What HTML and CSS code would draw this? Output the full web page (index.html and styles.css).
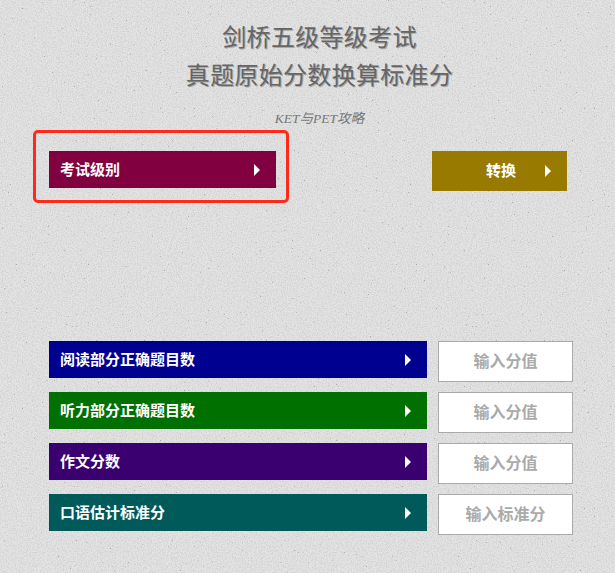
FILE: index.html
```html
<!DOCTYPE html>
<html lang="zh-CN">
<head>
  <meta charset="UTF-8" />
  <meta name="viewport" content="width=device-width, initial-scale=1.0"/>
  <title>剑桥五级等级考试</title>
  <link rel="stylesheet" href="styles.css">
</head>
<body>
  <div class="page">
    <h1 class="title">剑桥五级等级考试<br>真题原始分数换算标准分</h1>
    <p class="subtitle">KET与PET攻略</p>

    <div class="top-row">
      <div class="level-wrap">
        <div class="select select-level">
          <span>考试级别</span>
          <i class="arrow"></i>
        </div>
        <div class="highlight"></div>
      </div>
      <div class="select convert-btn">
        <span>转换</span>
        <i class="arrow"></i>
      </div>
    </div>

    <div class="score-rows">
      <div class="score-row">
        <div class="select blue"><span>阅读部分正确题目数</span><i class="arrow"></i></div>
        <div class="score-input">输入分值</div>
      </div>
      <div class="score-row">
        <div class="select green"><span>听力部分正确题目数</span><i class="arrow"></i></div>
        <div class="score-input">输入分值</div>
      </div>
      <div class="score-row">
        <div class="select purple"><span>作文分数</span><i class="arrow"></i></div>
        <div class="score-input">输入分值</div>
      </div>
      <div class="score-row">
        <div class="select teal"><span>口语估计标准分</span><i class="arrow"></i></div>
        <div class="score-input">输入标准分</div>
      </div>
    </div>
  </div>
</body>
</html>
```
FILE: styles.css
```css
html, body {
  margin: 0;
  height: 100%;
}
body {
  background-color: #e4e4e4;
  background-image:
    url("data:image/svg+xml,%3Csvg xmlns='http://www.w3.org/2000/svg' width='400' height='400'%3E%3Cfilter id='s'%3E%3CfeTurbulence type='fractalNoise' baseFrequency='0.5' numOctaves='1' seed='11'/%3E%3CfeColorMatrix values='0 0 0 0 0.4 0 0 0 0 0.4 0 0 0 0 0.4 14 0 0 0 -10.6'/%3E%3C/filter%3E%3Crect width='400' height='400' filter='url(%23s)'/%3E%3C/svg%3E"),
    url("data:image/svg+xml,%3Csvg xmlns='http://www.w3.org/2000/svg' width='300' height='300'%3E%3Cfilter id='n'%3E%3CfeTurbulence type='fractalNoise' baseFrequency='0.8' numOctaves='3' seed='4'/%3E%3CfeColorMatrix values='0 0 0 0 0.45 0 0 0 0 0.45 0 0 0 0 0.45 1 0 0 0 -0.38'/%3E%3C/filter%3E%3Crect width='300' height='300' filter='url(%23n)'/%3E%3C/svg%3E");
  font-family: "Liberation Serif", "Noto Sans CJK SC", serif;
  overflow: hidden;
}
.page {
  width: 615px;
  height: 573px;
  padding: 19px 25px 0 49px;
  box-sizing: border-box;
}
.title {
  margin: 0;
  font-size: 24px;
  line-height: 38px;
  font-weight: normal;
  letter-spacing: 0.3px;
  text-align: center;
  color: #666;
  text-shadow: 1px 1px 0 #aaa;
}
.subtitle {
  margin: 14px 0 0;
  height: 20px;
  font-size: 13.5px;
  line-height: 20px;
  font-style: italic;
  text-align: center;
  color: #777;
}
.top-row {
  display: flex;
  justify-content: space-between;
  align-items: flex-start;
  margin-top: 22px;
  padding-right: 23px;
}
.level-wrap {
  position: relative;
}
.select {
  display: flex;
  align-items: center;
  justify-content: space-between;
  height: 37px;
  padding: 0 16px 3px 11px;
  box-sizing: border-box;
  color: #fff;
  font-size: 15px;
  font-weight: bold;
}
.arrow {
  width: 0;
  height: 0;
  margin-top: 3px;
  border-left: 6px solid #fff;
  border-top: 6px solid transparent;
  border-bottom: 6px solid transparent;
}
.select-level {
  width: 227px;
  background: #800040;
}
.highlight {
  position: absolute;
  left: -16px;
  top: -21px;
  width: 256px;
  height: 73px;
  box-sizing: border-box;
  border: 3px solid #ff2a1a;
  border-radius: 5px;
}
.convert-btn {
  width: 135px;
  height: 40px;
  padding: 0 16px 3px 54px;
  background: #997a00;
}
.score-rows {
  display: flex;
  flex-direction: column;
  gap: 10px;
  margin-top: 150px;
}
.score-row {
  display: flex;
  align-items: flex-start;
  gap: 11px;
  height: 41px;
}
.score-row .select {
  width: 378px;
}
.blue { background: #000090; }
.green { background: #007000; }
.purple { background: #3a006f; }
.teal { background: #005a5a; }
.score-input {
  width: 135px;
  height: 41px;
  box-sizing: border-box;
  border: 1px solid #aaa;
  background: #fff;
  color: #aaa;
  font-size: 16px;
  font-weight: bold;
  line-height: 39px;
  text-align: center;
}
```
